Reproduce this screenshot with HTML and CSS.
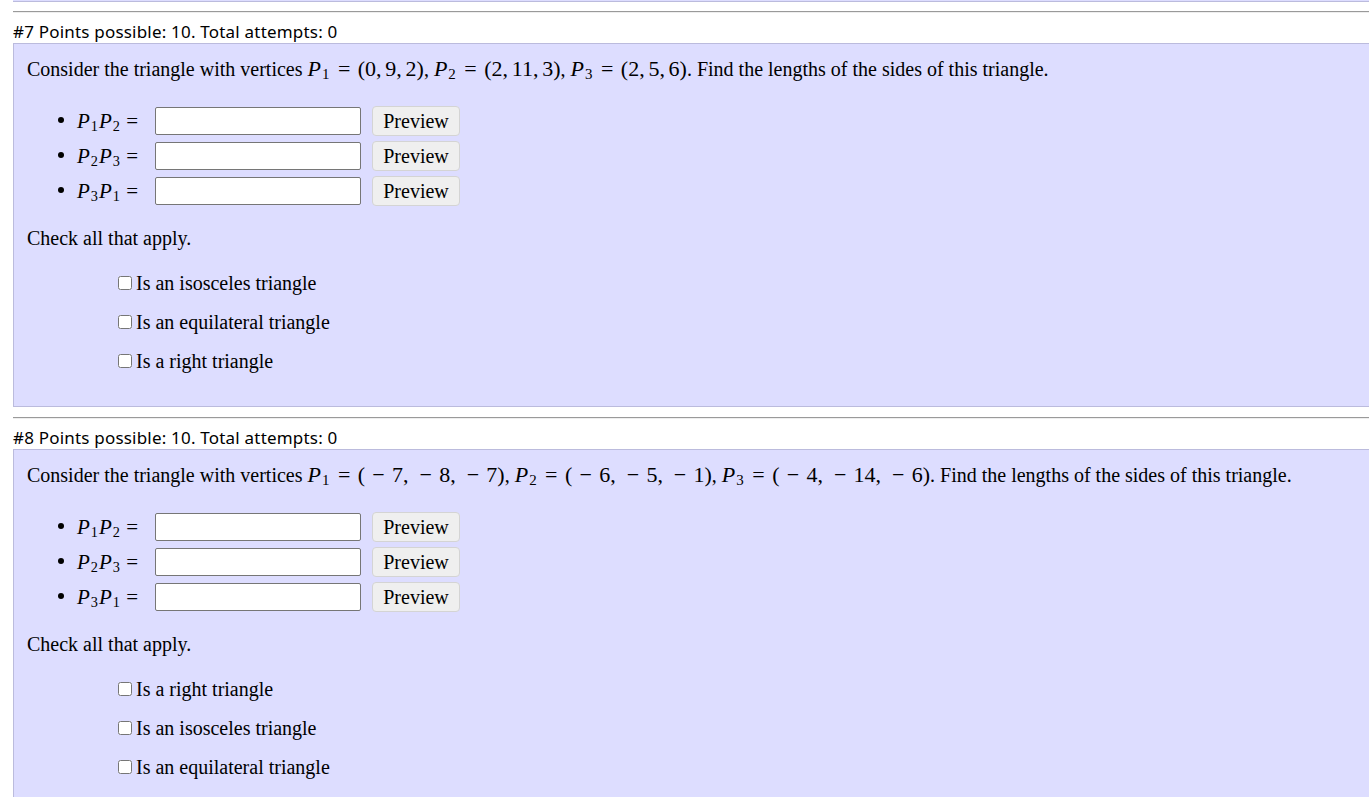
FILE: index.html
```html
<!DOCTYPE html>
<html lang="en">
<head>
<meta charset="utf-8">
<title>Homework</title>
<link rel="stylesheet" href="styles.css">
</head>
<body>
<div class="page">
  <div class="prev-tail"></div>

  <section class="question">
    <hr class="sep">
    <div class="qhead">#7 Points possible: 10. Total attempts: 0</div>
    <div class="qbox">
      <p class="stem">Consider the triangle with vertices <span class="m"><i>P</i><sub>1</sub><span class="rel">=</span>(0,<span class="sp"></span>9,<span class="sp"></span>2)</span>, <span class="m"><i>P</i><sub>2</sub><span class="rel">=</span>(2,<span class="sp"></span>11,<span class="sp"></span>3)</span>, <span class="m"><i>P</i><sub>3</sub><span class="rel">=</span>(2,<span class="sp"></span>5,<span class="sp"></span>6)</span>. Find the lengths of the sides of this triangle.</p>
      <ul class="answers">
        <li><span class="m lbl"><i>P</i><sub>1</sub><i>P</i><sub>2</sub><span class="rel">=</span></span><input type="text" class="ans"><button class="preview" type="button">Preview</button></li>
        <li><span class="m lbl"><i>P</i><sub>2</sub><i>P</i><sub>3</sub><span class="rel">=</span></span><input type="text" class="ans"><button class="preview" type="button">Preview</button></li>
        <li><span class="m lbl"><i>P</i><sub>3</sub><i>P</i><sub>1</sub><span class="rel">=</span></span><input type="text" class="ans"><button class="preview" type="button">Preview</button></li>
      </ul>
      <p class="check">Check all that apply.</p>
      <div class="choices">
        <label class="choice"><input type="checkbox">Is an isosceles triangle</label>
        <label class="choice"><input type="checkbox">Is an equilateral triangle</label>
        <label class="choice"><input type="checkbox">Is a right triangle</label>
      </div>
    </div>
  </section>

  <section class="question">
    <hr class="sep">
    <div class="qhead">#8 Points possible: 10. Total attempts: 0</div>
    <div class="qbox">
      <p class="stem">Consider the triangle with vertices <span class="m"><i>P</i><sub>1</sub><span class="rel">=</span>(<span class="bin">−</span>7,<span class="sp"></span><span class="bin">−</span>8,<span class="sp"></span><span class="bin">−</span>7)</span>, <span class="m"><i>P</i><sub>2</sub><span class="rel">=</span>(<span class="bin">−</span>6,<span class="sp"></span><span class="bin">−</span>5,<span class="sp"></span><span class="bin">−</span>1)</span>, <span class="m"><i>P</i><sub>3</sub><span class="rel">=</span>(<span class="bin">−</span>4,<span class="sp"></span><span class="bin">−</span>14,<span class="sp"></span><span class="bin">−</span>6)</span>. Find the lengths of the sides of this triangle.</p>
      <ul class="answers">
        <li><span class="m lbl"><i>P</i><sub>1</sub><i>P</i><sub>2</sub><span class="rel">=</span></span><input type="text" class="ans"><button class="preview" type="button">Preview</button></li>
        <li><span class="m lbl"><i>P</i><sub>2</sub><i>P</i><sub>3</sub><span class="rel">=</span></span><input type="text" class="ans"><button class="preview" type="button">Preview</button></li>
        <li><span class="m lbl"><i>P</i><sub>3</sub><i>P</i><sub>1</sub><span class="rel">=</span></span><input type="text" class="ans"><button class="preview" type="button">Preview</button></li>
      </ul>
      <p class="check">Check all that apply.</p>
      <div class="choices">
        <label class="choice"><input type="checkbox">Is a right triangle</label>
        <label class="choice"><input type="checkbox">Is an isosceles triangle</label>
        <label class="choice"><input type="checkbox">Is an equilateral triangle</label>
      </div>
    </div>
  </section>
</div>
</body>
</html>
```

FILE: styles.css
```css
html, body {
  margin: 0;
  padding: 0;
  background: #ffffff;
  overflow: hidden;
}

body {
  font-family: "Liberation Serif", "Times New Roman", serif;
  font-size: 20px;
  color: #000;
}

.page {
  padding-left: 13px;
  width: 1380px;
}

.prev-tail {
  height: 1px;
  background: #ddddff;
  border-bottom: 1px solid #bbbbdd;
}

.sep {
  margin: 9px 0 0 0;
  height: 0;
  border: 0;
  border-top: 1px solid #9a9a9a;
  border-bottom: 1px solid #eeeeee;
}

.qhead {
  margin-top: 8px;
  font-family: "Noto Sans", "Open Sans", sans-serif;
  font-size: 17px;
  line-height: 22px;
  letter-spacing: 0.2px;
  color: #000;
}

.qbox {
  background: #ddddff;
  border: 1px solid #bbbbdd;
  padding: 13px 13px 25px 13px;
  margin-bottom: 10px;
}

.stem {
  margin: 0;
  line-height: 24px;
  white-space: nowrap;
}

.m {
  font-family: "Liberation Serif", "Times New Roman", serif;
  font-size: 22px;
  white-space: nowrap;
}

.m i {
  font-style: italic;
  margin-right: 1px;
}

.m sub {
  font-size: 0.68em;
  vertical-align: -0.2em;
  line-height: 0;
  margin-right: 1px;
}

.rel {
  margin: 0 0.34em;
}

.bin {
  margin: 0 0.33em;
}

.sp {
  display: inline-block;
  width: 0.17em;
}

.answers {
  margin: 21px 0 0 0;
  padding-left: 50px;
  list-style: disc;
}

.answers li {
  height: 35px;
  line-height: 35px;
}

.lbl {
  display: inline-block;
  width: 78px;
  vertical-align: middle;
  font-size: 21px;
}

.lbl .rel {
  margin: 0 0.25em;
}

.ans {
  box-sizing: border-box;
  width: 206px;
  height: 28px;
  margin: 0 11px 0 0;
  padding: 1px 4px;
  border: 1px solid #767676;
  border-radius: 2px;
  background: #fff;
  vertical-align: middle;
  font-size: 16px;
}

.preview {
  box-sizing: border-box;
  width: 88px;
  height: 30px;
  padding: 0;
  margin: 0;
  font-family: "Liberation Serif", "Times New Roman", serif;
  font-size: 20px;
  line-height: 28px;
  color: #000;
  background: #efefef;
  border: 1px solid #d4d4d4;
  border-radius: 4px;
  vertical-align: middle;
}

.check {
  margin: 19px 0 0 0;
  line-height: 24px;
}

.choices {
  margin: 14px 0 0 87px;
  display: flex;
  flex-direction: column;
}

.choice {
  display: block;
  height: 39px;
  line-height: 39px;
}

.choice input {
  width: 14px;
  height: 14px;
  margin: 3px 4px 3px 4px;
}
```
